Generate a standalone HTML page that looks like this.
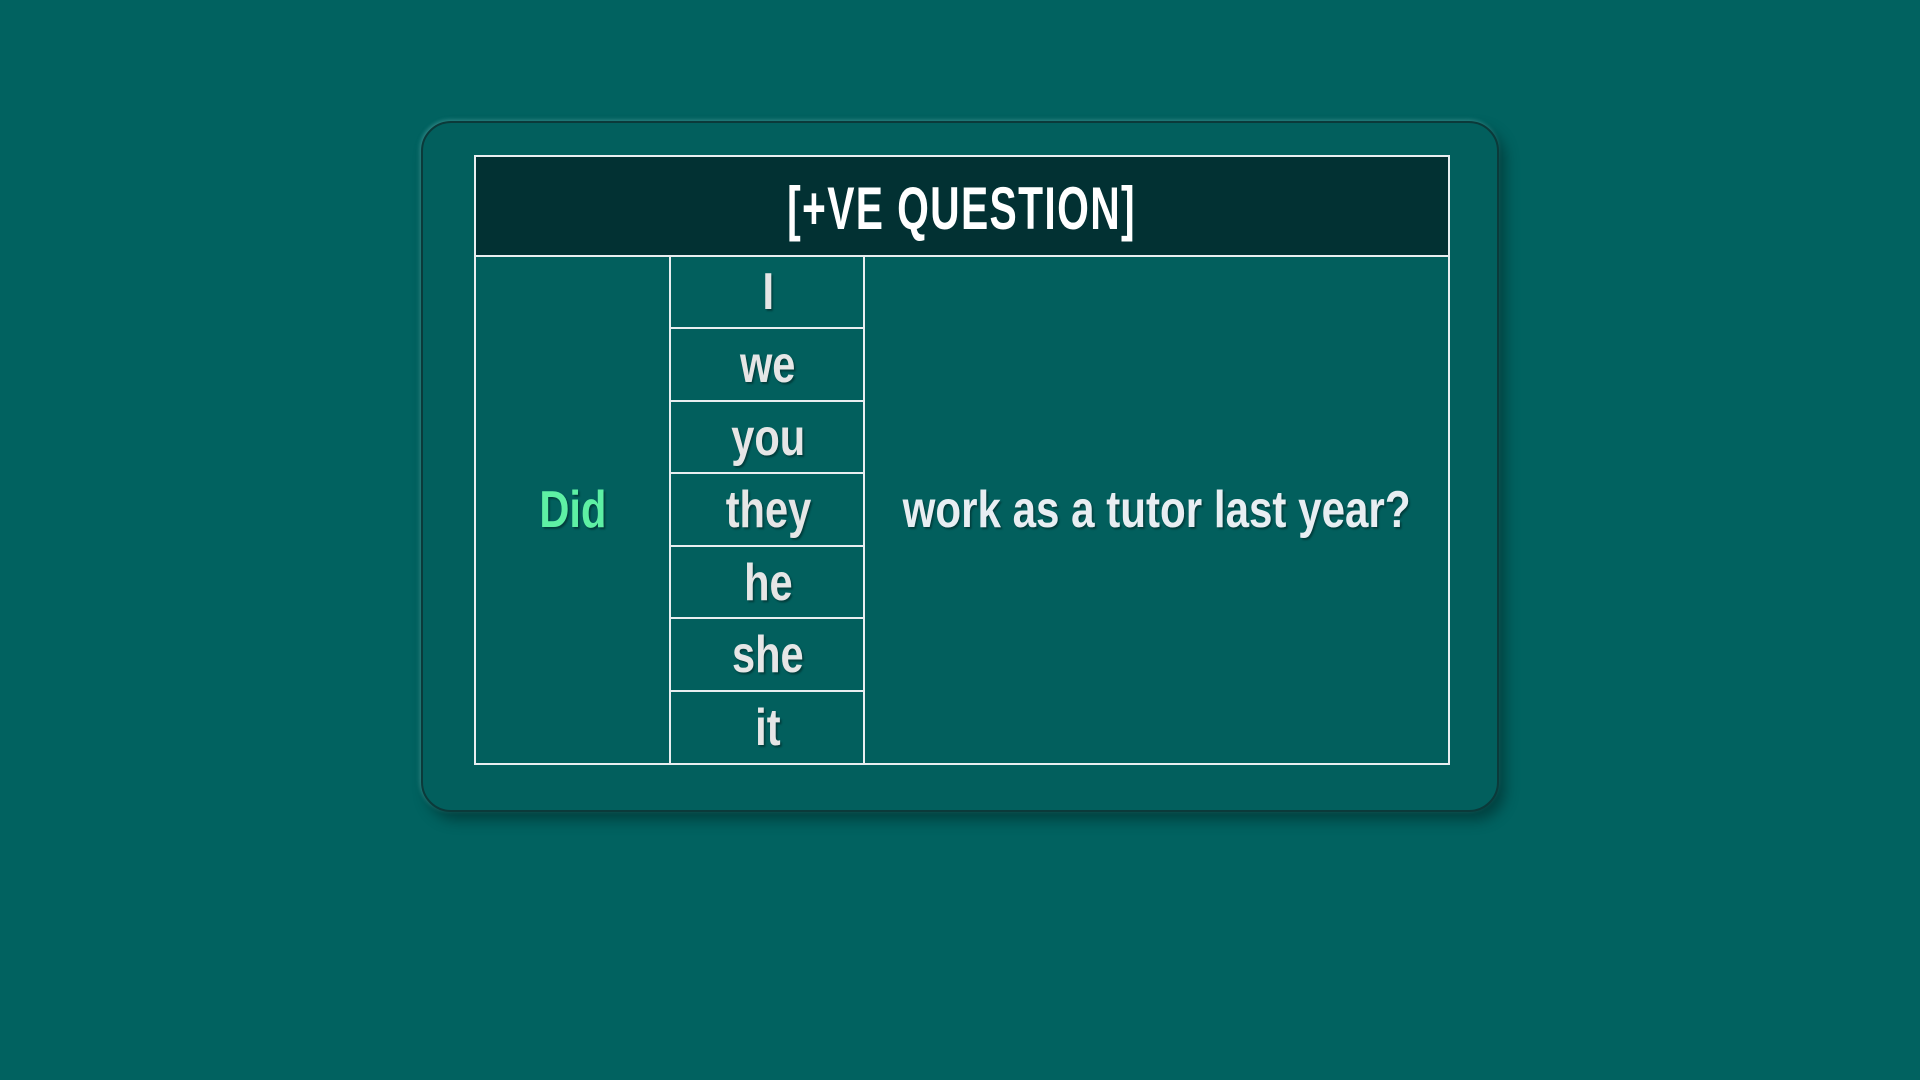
<!DOCTYPE html>
<html><head><style>
html,body{margin:0;padding:0;width:1920px;height:1080px;background:#016260;overflow:hidden;font-family:"Liberation Sans Narrow","Liberation Sans",sans-serif;}
.card{position:absolute;left:421px;top:121px;width:1078px;height:691px;border-radius:30px;background:#025f5d;border:2px solid #0b3a3a;box-shadow:6px 8px 14px rgba(0,0,0,.35),-1px -1px 4px rgba(150,220,220,.35);box-sizing:border-box;}
.t{position:absolute;left:474px;top:155px;width:976px;height:610px;border:2px solid #e8eef0;box-sizing:border-box;}
.hd{position:absolute;left:0;top:0;right:0;height:98px;background:#023133;border-bottom:2px solid #e8eef0;display:flex;align-items:center;justify-content:center;}
.hd span{color:#fff;font-weight:bold;font-size:60px;display:inline-block;transform:scaleX(.68);letter-spacing:2px;margin-top:4px;}
.v{position:absolute;top:100px;bottom:0;width:2px;background:#e8eef0;}
.h{position:absolute;left:195px;width:194px;height:2px;background:#e8eef0;}
.c{position:absolute;left:195px;width:194px;height:72px;display:flex;align-items:center;justify-content:center;color:#e6e6e6;font-size:52px;font-weight:bold;text-shadow:2px 2px 2px rgba(0,0,0,.35);}
.c span,.big span{display:inline-block;transform:scaleX(.8);}
.big{position:absolute;display:flex;align-items:center;justify-content:center;font-size:52px;font-weight:bold;text-shadow:2px 2px 2px rgba(0,0,0,.35);}
</style></head><body>
<div class="card"></div>
<div class="t">
<div class="hd"><span>[+VE QUESTION]</span></div>
<div class="v" style="left:193px"></div>
<div class="v" style="left:387px"></div>
<div class="h" style="top:170px"></div>
<div class="h" style="top:243px"></div>
<div class="h" style="top:315px"></div>
<div class="h" style="top:388px"></div>
<div class="h" style="top:460px"></div>
<div class="h" style="top:533px"></div>
<div class="c" style="top:99px"><span>I</span></div>
<div class="c" style="top:172px"><span>we</span></div>
<div class="c" style="top:245px"><span>you</span></div>
<div class="c" style="top:317px"><span>they</span></div>
<div class="c" style="top:390px"><span>he</span></div>
<div class="c" style="top:462px"><span>she</span></div>
<div class="c" style="top:535px"><span>it</span></div>
<div class="big" style="left:0;width:193px;top:317px;height:72px;color:#5ef0a4"><span>Did</span></div>
<div class="big" style="left:389px;right:0;top:317px;height:72px;color:#e8eef2"><span style="white-space:nowrap;transform:scaleX(.81)">work as a tutor last year?</span></div>
</div>
</body></html>
